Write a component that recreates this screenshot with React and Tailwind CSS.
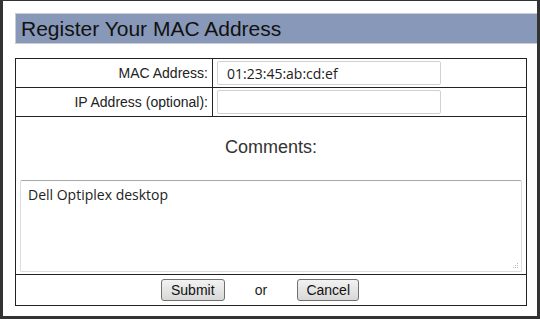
import { useState } from 'react'

export default function App() {
  const [mac, setMac] = useState('01:23:45:ab:cd:ef')
  const [ip, setIp] = useState('')
  const [comments, setComments] = useState('Dell Optiplex desktop')

  return (
    <div className="w-[540px] h-[319px] bg-white border-[#333] border-t border-x-[3px] border-b-[3px] pl-[12px] pt-[12px] font-['Liberation_Sans',Arial,sans-serif]">
      {/* Header */}
      <div className="h-[31px] bg-[#8898b8] border-y border-l border-[#c9ccd3] flex items-center pl-[5px]">
        <h1 className="text-[21px] leading-none text-[#111]">Register Your MAC Address</h1>
      </div>

      {/* Form table */}
      <div className="mt-[14px] mr-[10px] border border-[#222]">
        <div className="flex h-[29px] border-b border-[#222]">
          <div className="w-[197px] border-r border-[#222] flex items-center justify-end pr-[4px] text-[14px] text-[#222]">
            MAC Address:
          </div>
          <div className="flex items-center pl-[4px]">
            <input
              value={mac}
              onChange={(e) => setMac(e.target.value)}
              className="w-[224px] h-[24px] border border-[#d0d0d0] rounded-[2px] px-[9px] text-[14px] text-[#222] font-['Open_Sans',sans-serif] outline-none"
            />
          </div>
        </div>
        <div className="flex h-[29px] border-b border-[#222]">
          <div className="w-[197px] border-r border-[#222] flex items-center justify-end pr-[4px] text-[14px] text-[#222]">
            IP Address (optional):
          </div>
          <div className="flex items-center pl-[4px]">
            <input
              value={ip}
              onChange={(e) => setIp(e.target.value)}
              className="w-[224px] h-[24px] border border-[#d0d0d0] rounded-[2px] px-[9px] text-[14px] text-[#222] font-['Open_Sans',sans-serif] outline-none"
            />
          </div>
        </div>

        {/* Comments */}
        <div className="h-[158px] border-b border-[#222] flex flex-col">
          <div className="pt-[20px] text-center text-[18px] leading-[21px] text-[#333]">Comments:</div>
          <div className="px-[4px] mt-[22px] relative">
            <textarea
              value={comments}
              onChange={(e) => setComments(e.target.value)}
              className="block w-full h-[92px] resize-none border border-[#dcdcdc] border-t-[#a8a8a8] rounded-[2px] px-[7px] pt-[3px] text-[14px] text-[#222] font-['Open_Sans',sans-serif] outline-none"
            />
            {/* resize grip */}
            <svg className="absolute right-[7px] bottom-[3px]" width="6" height="6" viewBox="0 0 6 6" fill="#b5b5b5">
              <rect x="4" y="0" width="1" height="1" />
              <rect x="2" y="2" width="1" height="1" />
              <rect x="4" y="2" width="1" height="1" />
              <rect x="0" y="4" width="1" height="1" />
              <rect x="2" y="4" width="1" height="1" />
              <rect x="4" y="4" width="1" height="1" />
            </svg>
          </div>
        </div>

        {/* Buttons */}
        <div className="h-[30px] flex items-center justify-center pr-[22px] text-[14px]">
          <button className="w-[64px] h-[22px] border border-[#707070] rounded-[3px] bg-gradient-to-b from-[#f2f2f2] to-[#d8d8d8] text-[14px] text-[#111] leading-none">
            Submit
          </button>
          <span className="mx-[30px] text-[#222]">or</span>
          <button className="w-[62px] h-[22px] border border-[#707070] rounded-[3px] bg-gradient-to-b from-[#f2f2f2] to-[#d8d8d8] text-[14px] text-[#111] leading-none">
            Cancel
          </button>
        </div>
      </div>
    </div>
  )
}
